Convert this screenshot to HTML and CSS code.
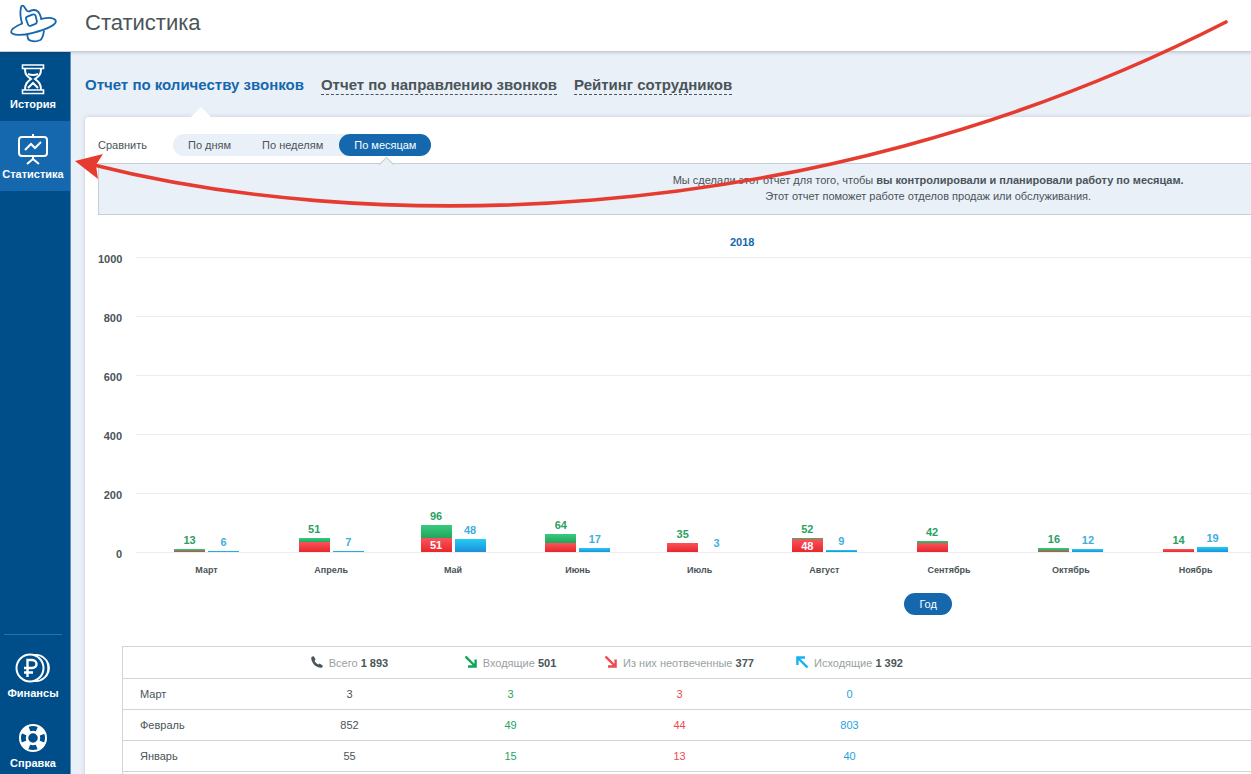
FILE: index.html
```html
<!DOCTYPE html>
<html lang="ru">
<head>
<meta charset="utf-8">
<title>Статистика</title>
<link rel="stylesheet" href="styles.css">
</head>
<body>
<header class="topbar">
  <a class="logo" href="#" aria-label="Главная">
    <svg viewBox="0 0 180 130" width="60" height="43" fill="none" stroke="#1568b0" stroke-width="5.500" stroke-linecap="round" stroke-linejoin="round">
      <path d="M66 68C60 48 60 31 63 18C65 12 70 13 73 18L80 29Q85 33 91 30Q103 24 113 31Q121 38 124 55"/>
      <path d="M66 68C45 77 32 86 33 94C36 105 66 105 99 96C139 86 170 72 168 60C164 50 146 49 124 54"/>
      <path d="M80 48L97 41Q105 39 107 45L111 62Q111 68 105 70L91 75Q86 76 84 71L78 55Q77 50 80 48Z"/>
      <path d="M82 103Q83 118 92 120Q107 125 121 118Q129 113 132 91"/>
    </svg>
  </a>
  <h1 class="page-title">Статистика</h1>
</header>

<div class="layout">
  <nav class="sidebar">
    <a class="nav-item" href="#">
      <svg viewBox="0 0 32 32" width="32" height="32" fill="none" stroke="#fff" stroke-width="2">
        <path d="M5.500 2H26.500V5.500H5.500ZM5.500 27H26.500V30.500H5.500Z" stroke-width="1.600"/>
        <path d="M8 6C8 12 10 13 14 16C10 19 8 21 8 27M24 6C24 12 22 13 18 16C22 19 24 21 24 27M11 11Q16 13 21 11M11 25L16 20L21 25"/>
      </svg>
      <span>История</span>
    </a>
    <a class="nav-item nav-item-active" href="#">
      <svg viewBox="0 0 32 32" width="32" height="32" fill="none" stroke="#fff" stroke-width="2">
        <rect x="2" y="4" width="28" height="19" rx="3"/>
        <path d="M16 1V4M8 17L14 11L18 15L24 9M16 23V27M10 31L16 26L22 31" />
      </svg>
      <span>Статистика</span>
    </a>
    <div class="nav-bottom">
      <a class="nav-item" href="#">
        <svg viewBox="0 0 36 32" width="36" height="32" fill="none" stroke="#fff" stroke-width="2">
          <circle cx="15" cy="16" r="13.500"/>
          <path d="M19 3C38 1 38 31 19 29M25 3.500C37 9 37 23 25 28.500" stroke-width="1.800"/>
          <path d="M12.500 25V8H17C23 8 23 16 17 16H9M9 20.500H18" stroke-width="2.400"/>
        </svg>
        <span>Финансы</span>
      </a>
      <a class="nav-item" href="#">
        <svg viewBox="0 0 32 32" width="32" height="32" fill="none" stroke="#fff">
          <circle cx="16" cy="16" r="13" stroke-width="2"/>
          <circle cx="16" cy="16" r="6" stroke-width="2.500"/>
          <circle cx="16" cy="16" r="9.500" stroke-width="7" stroke-dasharray="7.500 7.420" transform="rotate(22 16 16)"/>
        </svg>
        <span>Справка</span>
      </a>
    </div>
  </nav>

  <main class="content">
    <nav class="tabs">
      <a class="tab tab-active" href="#">Отчет по количеству звонков</a>
      <a class="tab" href="#">Отчет по направлению звонков</a>
      <a class="tab" href="#">Рейтинг сотрудников</a>
    </nav>

    <section class="panel">
      <div class="compare">
        <span class="compare-label">Сравнить</span>
        <div class="segmented">
          <button type="button">По дням</button>
          <button type="button">По неделям</button>
          <button type="button" class="selected">По месяцам</button>
        </div>
      </div>

      <div class="notice">
        <p>Мы сделали этот отчет для того, чтобы <b>вы контролировали и планировали работу по месяцам.</b></p>
        <p>Этот отчет поможет работе отделов продаж или обслуживания.</p>
      </div>

      <div class="chart">
        <div class="chart-year">2018</div>
        <div class="plot">
          <div class="axis"><span>1000</span><span>800</span><span>600</span><span>400</span><span>200</span><span>0</span></div>
          <div class="plot-area">
            <div class="grid"><i></i><i></i><i></i><i></i><i></i></div>
            <div class="months">
              <div class="month d31"><div class="pair">
                <div class="bar in"><b>13</b><i class="green" style="height:2px"></i><i class="red" style="height:1px"></i></div>
                <div class="bar out"><b>6</b><i class="blue" style="height:1px"></i></div></div></div>
              <div class="month d30"><div class="pair">
                <div class="bar in"><b>51</b><i class="green" style="height:4px"></i><i class="red" style="height:10px"></i></div>
                <div class="bar out"><b>7</b><i class="blue" style="height:1px"></i></div></div></div>
              <div class="month d31"><div class="pair">
                <div class="bar in"><b>96</b><i class="green" style="height:13px"></i><i class="red" style="height:14px">51</i></div>
                <div class="bar out"><b>48</b><i class="blue" style="height:13px"></i></div></div></div>
              <div class="month d30"><div class="pair">
                <div class="bar in"><b>64</b><i class="green" style="height:9px"></i><i class="red" style="height:9px"></i></div>
                <div class="bar out"><b>17</b><i class="blue" style="height:4px"></i></div></div></div>
              <div class="month d31"><div class="pair">
                <div class="bar in"><b>35</b><i class="red" style="height:9px"></i></div>
                <div class="bar out"><b>3</b></div></div></div>
              <div class="month d31"><div class="pair">
                <div class="bar in"><b>52</b><i class="green" style="height:1px"></i><i class="red" style="height:13px">48</i></div>
                <div class="bar out"><b>9</b><i class="blue" style="height:2px"></i></div></div></div>
              <div class="month d30"><div class="pair">
                <div class="bar in"><b>42</b><i class="green" style="height:2px"></i><i class="red" style="height:9px"></i></div>
                <div class="bar out"></div></div></div>
              <div class="month d31"><div class="pair">
                <div class="bar in"><b>16</b><i class="green" style="height:3px"></i><i class="red" style="height:1px"></i></div>
                <div class="bar out"><b>12</b><i class="blue" style="height:3px"></i></div></div></div>
              <div class="month d30"><div class="pair">
                <div class="bar in"><b>14</b><i class="red" style="height:3px"></i></div>
                <div class="bar out"><b>19</b><i class="blue" style="height:5px"></i></div></div></div>
            </div>
            <div class="month-names">
              <div class="month d31"><span>Март</span></div>
              <div class="month d30"><span>Апрель</span></div>
              <div class="month d31"><span>Май</span></div>
              <div class="month d30"><span>Июнь</span></div>
              <div class="month d31"><span>Июль</span></div>
              <div class="month d31"><span>Август</span></div>
              <div class="month d30"><span>Сентябрь</span></div>
              <div class="month d31"><span>Октябрь</span></div>
              <div class="month d30"><span>Ноябрь</span></div>
            </div>
          </div>
        </div>
      </div>

      <div class="period"><button type="button" class="pill">Год</button></div>

      <div class="table-frame">
        <table class="totals">
          <colgroup><col class="c-name"><col class="c-total"><col class="c-in"><col class="c-missed"><col class="c-out"><col></colgroup>
          <thead>
            <tr>
              <th></th>
              <th><svg viewBox="0 0 12 12" width="12" height="12"><path d="M0.800 0.800Q2.500 -0.500 3.300 1L4.500 3.400L3.500 5Q5 7.400 7.200 8.600L8.600 7.600L11.500 9.400Q12.500 10.500 10.500 11.800Q6 12 2.500 8Q-1 3 0.800 0.800Z" fill="#4a5459"/></svg><span>Всего</span> <b>1 893</b></th>
              <th><svg viewBox="0 0 12 12" width="12" height="12" fill="none" stroke="#10a55c" stroke-width="2.400"><path d="M0.500 0.500L10 10M3 10.500H10.600V3.500"/></svg><span>Входящие</span> <b>501</b></th>
              <th><svg viewBox="0 0 12 12" width="12" height="12" fill="none" stroke="#f04a50" stroke-width="2.400"><path d="M0.500 0.500L10 10M3 10.500H10.600V3.500"/></svg><span>Из них неотвеченные</span> <b>377</b></th>
              <th><svg viewBox="0 0 12 12" width="12" height="12" fill="none" stroke="#1ab2ee" stroke-width="2.400"><path d="M11.500 11.500L2 2M9 1.500H1.400V9"/></svg><span>Исходящие</span> <b>1 392</b></th>
              <th></th>
            </tr>
          </thead>
          <tbody>
            <tr><td>Март</td><td>3</td><td class="t-in">3</td><td class="t-missed">3</td><td class="t-out">0</td><td></td></tr>
            <tr><td>Февраль</td><td>852</td><td class="t-in">49</td><td class="t-missed">44</td><td class="t-out">803</td><td></td></tr>
            <tr><td>Январь</td><td>55</td><td class="t-in">15</td><td class="t-missed">13</td><td class="t-out">40</td><td></td></tr>
            <tr><td></td><td></td><td></td><td></td><td></td><td></td></tr>
          </tbody>
        </table>
      </div>
    </section>
  </main>
</div>

<svg class="pointer" viewBox="0 0 1251 220" width="1251" height="220" aria-hidden="true">
  <path d="M1226 22C796 242 346 229 94 165" fill="none" stroke="#e63c2f" stroke-width="3.600" stroke-linecap="round"/>
  <path d="M75 161L103 154L96 165L98 179Z" fill="#e63c2f"/>
</svg>
</body>
</html>
```
FILE: styles.css
```css
* { box-sizing: border-box; }
body {
  margin: 0;
  height: 100vh;
  display: flex;
  flex-direction: column;
  overflow: hidden;
  position: relative;
  background: #e9f0f8;
  color: #4a5459;
  font: 11px/16px "Liberation Sans", Arial, sans-serif;
}
a { color: inherit; text-decoration: none; }
p { margin: 0; }
button { font: inherit; color: inherit; border: 0; background: none; margin: 0; cursor: pointer; }

.topbar {
  flex: none;
  height: 52px;
  display: flex;
  align-items: center;
  background: #fff;
  border-bottom: 1px solid #c9ced2;
  box-shadow: 0 1px 3px rgba(0, 0, 0, .15);
  z-index: 1;
}
.logo { width: 85px; height: 43px; margin-bottom: 6px; }
.logo svg { display: block; }
.page-title { margin: 0 0 6px; font-size: 22px; line-height: 28px; font-weight: 400; }

.layout { flex: 1; min-height: 0; display: flex; }
.sidebar {
  flex: none;
  width: 71px;
  margin-top: -1px;
  display: flex;
  flex-direction: column;
  background: #004e89;
  border-right: 1px solid #5d93c2;
  padding-right: 4px;
  color: #fff;
  font-weight: 700;
}
.nav-item {
  flex: none;
  height: 70px;
  display: flex;
  flex-direction: column;
  align-items: center;
  padding-top: 12px;
  gap: 1px;
}
.nav-item svg { display: block; }
.nav-item-active { background: #1568ad; margin-right: -4px; padding-right: 4px; }
.nav-bottom { margin: auto 4px 0; border-top: 1px solid #2f6fa5; padding-top: 5px; }
.nav-bottom .nav-item:last-child { height: 64px; }

.content { flex: 1; min-width: 0; padding-left: 14px; overflow: hidden; display: flex; flex-direction: column; }
.tabs { display: flex; gap: 17px; padding-top: 24px; height: 65px; flex: none; font-size: 15px; line-height: 18px; font-weight: 700; white-space: nowrap; }
.tab { height: 19px; border-bottom: 1px dashed #4a5459; }
.tab-active { position: relative; color: #1568ad; border: 0; }
.tab-active::after {
  content: "";
  position: absolute;
  left: 106px;
  top: 31px;
  border: 10px solid transparent;
  border-top: 0;
  border-bottom-color: #fff;
}

.panel {
  flex: 1;
  background: #fff;
  border-radius: 4px 0 0 0;
  box-shadow: 0 0 5px rgba(0, 0, 0, .15);
  padding: 17px 0 0 13px;
}
.compare { display: flex; align-items: center; height: 22px; }
.compare-label { width: 75px; }
.segmented { display: flex; gap: 1px; background: #e9f0f8; border-radius: 11px; }
.segmented button { height: 22px; padding: 0 15px; border-radius: 11px; }
.segmented .selected { position: relative; background: #1568ad; color: #fff; }
.segmented .selected::after {
  content: "";
  position: absolute;
  left: 42px;
  top: 25px;
  width: 10px;
  height: 10px;
  background: #e9f0f8;
  border: solid #c6cfd3;
  border-width: 1px 0 0 1px;
  transform: rotate(45deg);
}
.notice {
  width: 144%;
  margin-top: 7px;
  height: 52px;
  padding-top: 8px;
  background: #e9f0f8;
  border: 1px solid #c6cfd3;
  text-align: center;
}

.chart-year { padding: 19px 0 0 632px; color: #1568ad; font-weight: 700; }
.plot { display: flex; padding-top: 7px; }
.axis { width: 38px; padding-right: 14px; font-weight: 700; text-align: right; margin-top: -6px; }
.axis span { display: block; height: 59px; }
.axis span:last-child { height: 16px; }
.plot-area { flex: 1; min-width: 0; display: grid; grid-template-rows: 296px auto; }
.grid, .months { grid-area: 1 / 1; }
.grid { border-bottom: 1px solid #ececee; }
.grid i { display: block; height: 59px; border-top: 1px solid #ececee; }
.months, .month-names { display: flex; padding-right: 4px; }
.months { padding-bottom: 1px; align-items: flex-end; }
.month { padding-left: 38px; min-width: 0; }
.d30 { flex: 30 1 0; }
.d31 { flex: 31 1 0; }
.pair { width: 65px; display: flex; gap: 3px; align-items: flex-end; }
.bar { width: 31px; text-align: center; font-weight: 700; line-height: 14px; }
.bar b { display: block; height: 16px; }
.bar i { display: block; font-style: normal; color: #fff; }
.in { color: #2b9f5f; }
.out { color: #41aee0; }
.green { background: #22a55c linear-gradient(#37cb80, #22a55c); }
.red { background: #e8262e linear-gradient(#f9545a, #e8262e); }
.blue { background: #22bdec linear-gradient(#22cdf3, #1d8fdb); }
.month-names { padding-top: 10px; font-size: 9px; font-weight: 700; line-height: 14px; }
.month-names span { display: block; width: 65px; text-align: center; }

.period { width: 144%; display: flex; justify-content: center; padding-top: 16px; }
.pill { height: 22px; padding: 0 15px; border-radius: 11px; background: #1568ad; color: #fff; }

.table-frame { margin: 31px 0 0 24px; }
.totals {
  width: 144%;
  table-layout: fixed;
  border-collapse: collapse;
  border: 1px solid #cfd6d8;
}
.c-name { width: 147px; }
.c-total { width: 160px; }
.c-in { width: 162px; }
.c-missed { width: 176px; }
.c-out { width: 164px; }
.totals tr { height: 31px; border-bottom: 1px solid #cfd6d8; }
.totals thead tr { height: 32px; }
.totals th, .totals td { padding: 0; text-align: center; font-weight: 400; white-space: nowrap; }
.totals td:first-child { text-align: left; padding-left: 17px; }
.totals th span { color: #999fa2; }
.totals th svg { vertical-align: -1px; margin-right: 6px; }
.t-in { color: #1fa560; }
.t-missed { color: #f04a50; }
.t-out { color: #2a9fdd; }

.pointer { position: absolute; left: 0; top: 0; z-index: 2; pointer-events: none; }
```
